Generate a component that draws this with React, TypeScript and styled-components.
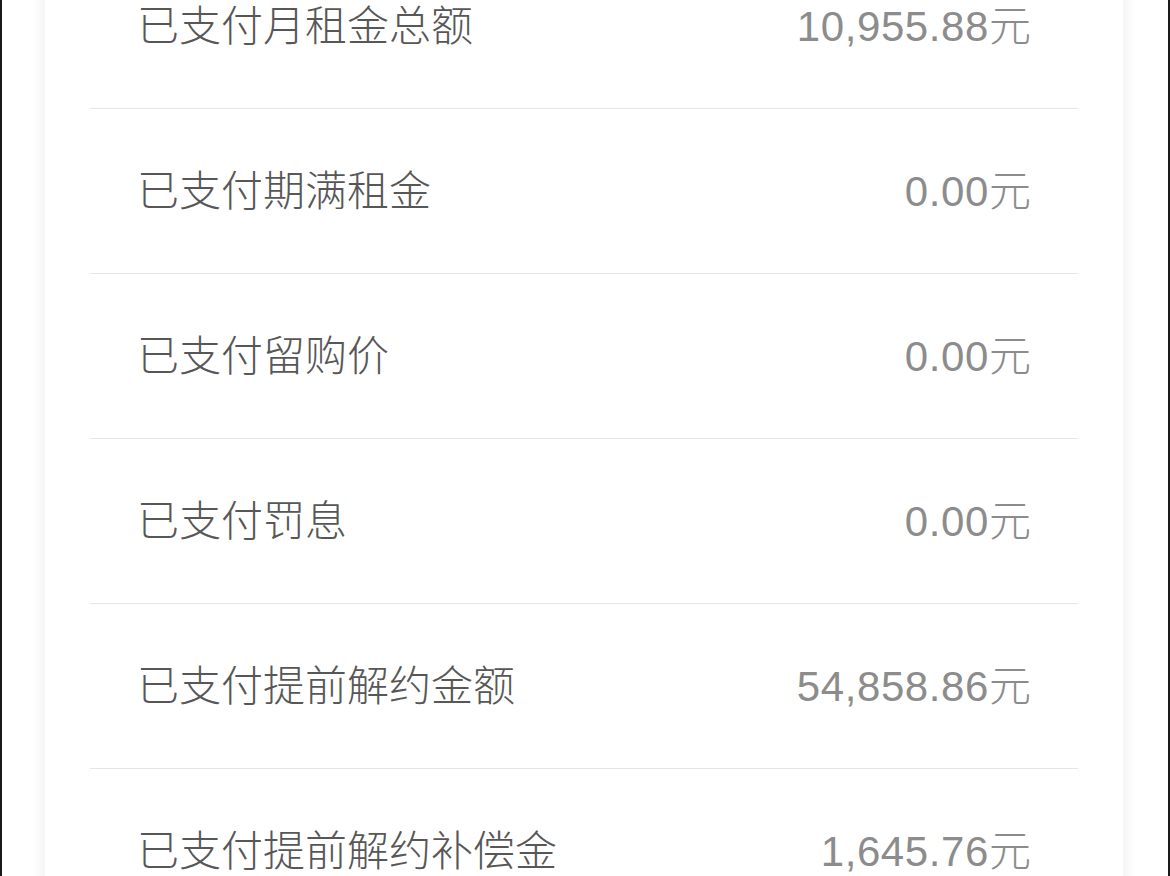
import styled, { createGlobalStyle } from 'styled-components';

const GlobalStyle = createGlobalStyle`
  html, body {
    margin: 0;
    padding: 0;
    background: #ffffff;
  }
  body {
    font-family: 'Noto Sans CJK SC', 'Noto Sans', sans-serif;
  }
`;

const Frame = styled.div`
  height: 876px;
  overflow: hidden;
  border-left: 2px solid #1a1a1a;
  border-right: 2px solid #1a1a1a;
  background: #ffffff;
  padding: 0 45px 0 43px;
  box-sizing: border-box;
`;

const Card = styled.section`
  margin-top: -56px;
  background: #ffffff;
  box-shadow: 0 0 14px rgba(0, 0, 0, 0.09);
  padding: 0 45px;
`;

const Row = styled.div`
  display: flex;
  align-items: center;
  justify-content: space-between;
  height: 165px;
  box-sizing: border-box;
  padding: 0 47px 7px 47px;
  border-bottom: 1px solid #e6e6e6;
`;

const Label = styled.span`
  font-size: 42px;
  font-weight: 300;
  color: #575757;
`;

const Value = styled.span`
  font-family: 'Liberation Sans', 'Noto Sans CJK SC', sans-serif;
  font-size: 42px;
  letter-spacing: 0.6px;
  color: #8c8c8c;

  .unit {
    font-family: 'Noto Sans CJK SC', sans-serif;
    font-weight: 300;
    letter-spacing: 0;
  }
`;

const rows = [
  { label: '已支付月租金总额', value: '10,955.88' },
  { label: '已支付期满租金', value: '0.00' },
  { label: '已支付留购价', value: '0.00' },
  { label: '已支付罚息', value: '0.00' },
  { label: '已支付提前解约金额', value: '54,858.86' },
  { label: '已支付提前解约补偿金', value: '1,645.76' },
];

const App = () => {
  return (
    <>
      <GlobalStyle />
      <Frame>
        <Card>
          {rows.map((r) => (
            <Row key={r.label}>
              <Label>{r.label}</Label>
              <Value>
                {r.value}
                <span className='unit'>元</span>
              </Value>
            </Row>
          ))}
        </Card>
      </Frame>
    </>
  );
};

export default App;
